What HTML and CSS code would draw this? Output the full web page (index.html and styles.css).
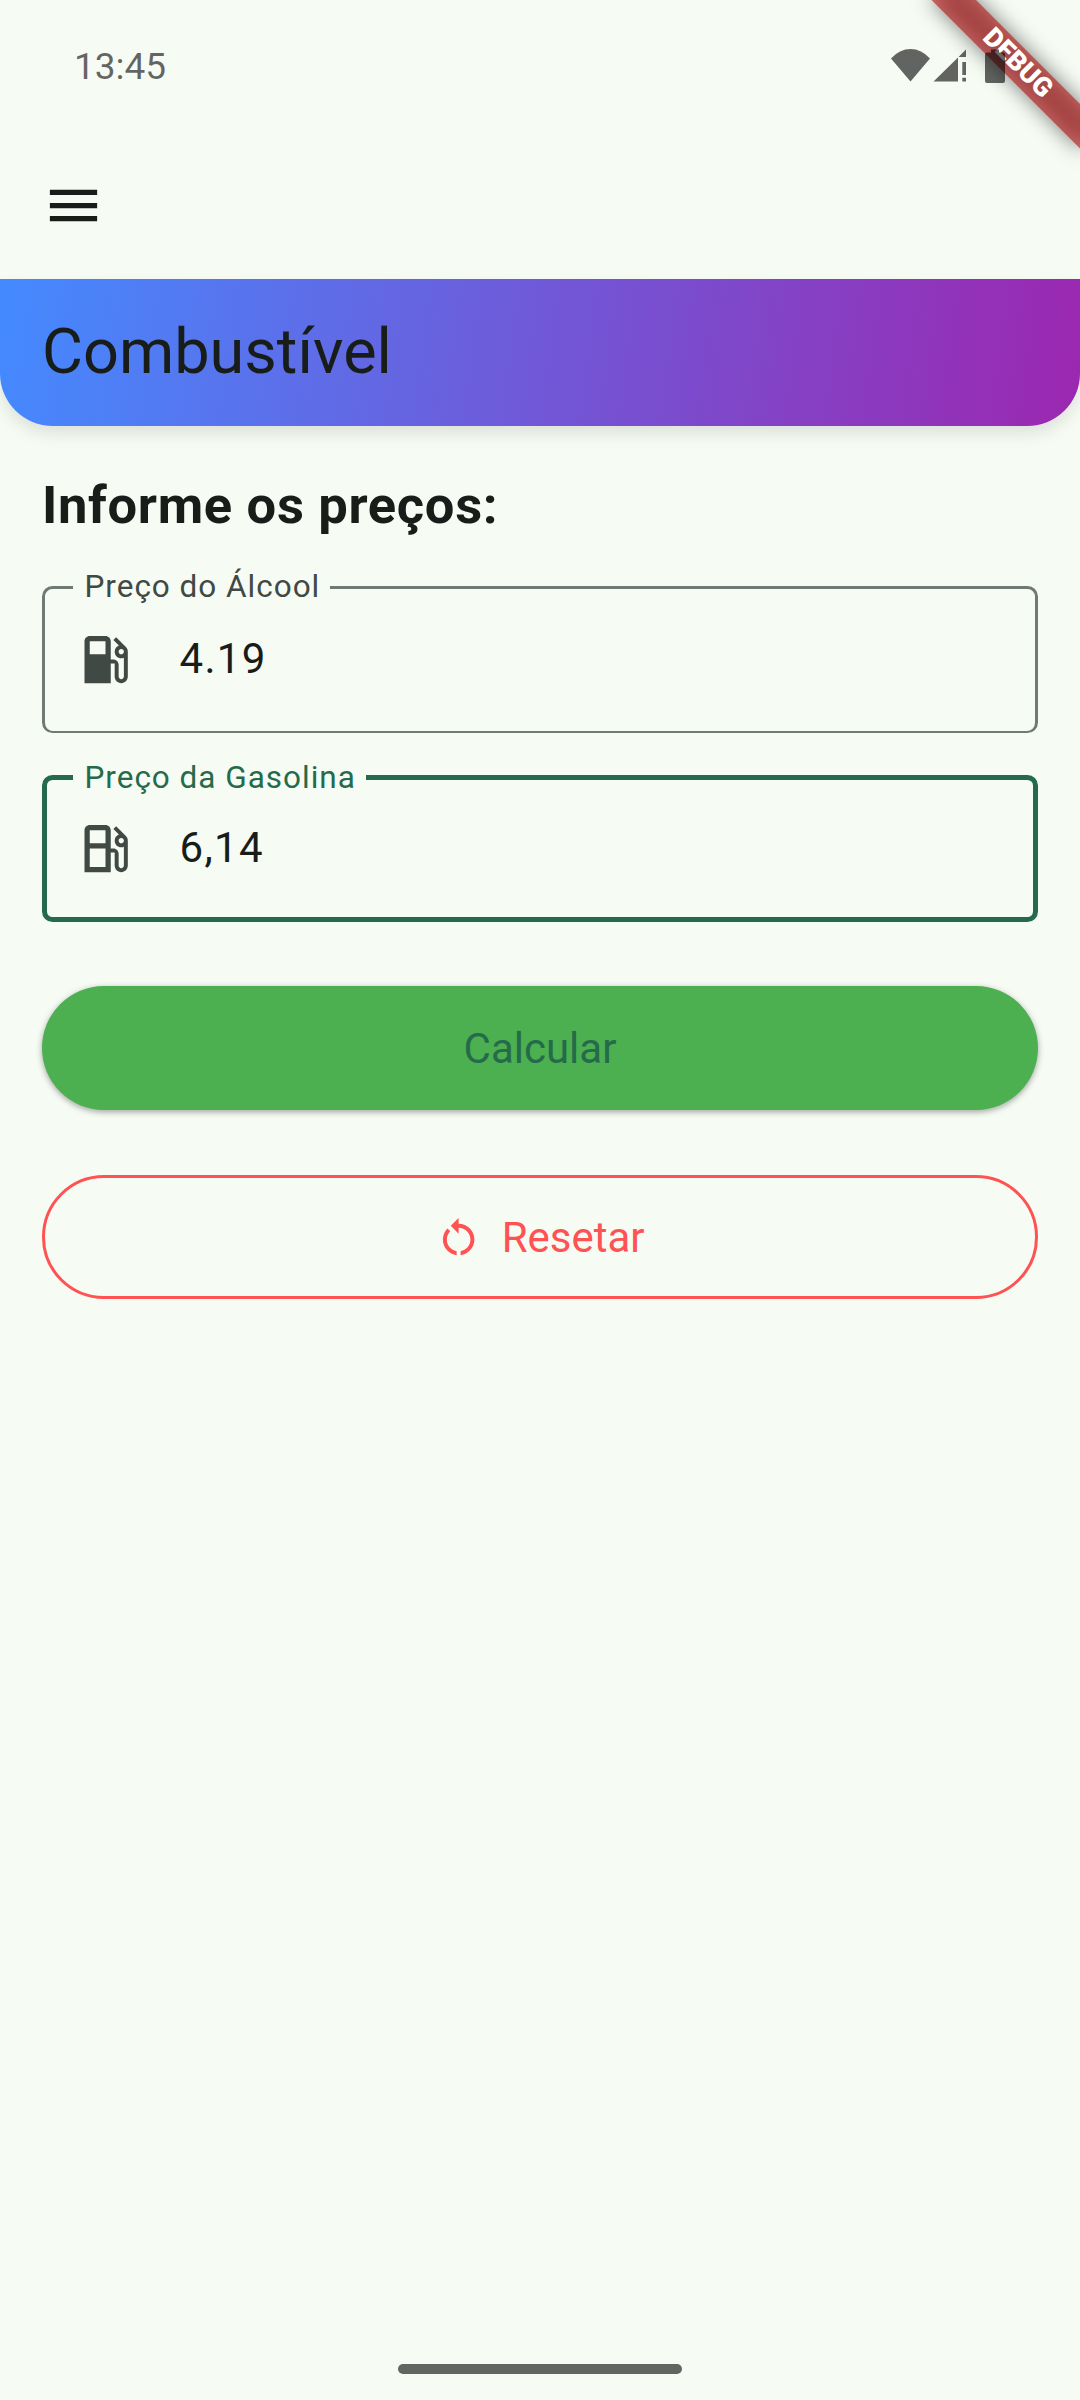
FILE: index.html
```html
<!DOCTYPE html>
<html lang="pt-BR">
<head>
<meta charset="utf-8">
<title>Combustível</title>
<link rel="stylesheet" href="styles.css">
</head>
<body>
<div class="screen">
  <svg class="debug-banner" viewBox="0 0 200 200" aria-hidden="true">
    <defs><filter id="soft" x="-50%" y="-100%" width="200%" height="300%"><feGaussianBlur stdDeviation="10.4"/></filter></defs>
    <g transform="translate(200 0) rotate(45)">
      <rect class="banner-shadow" x="-105" y="73.5" width="210" height="31.5" filter="url(#soft)"/>
      <rect class="banner-band" x="-105" y="73.5" width="210" height="31.5"/>
      <text class="banner-text" x="0.5" y="97">DEBUG</text>
    </g>
  </svg>
  <header class="status-bar">
    <span class="clock">13:45</span>
    <svg class="status-icons" viewBox="0 0 115 35" aria-hidden="true">
      <path d="M0 9.5Q8.5 0 19.5 0T39 9.5L19.5 32.5Z"/>
      <path d="M42.5 32.5L67 8.5V32.5ZM67.500 8L75 .5V8ZM71.300 13H75V26H71.300ZM71.300 28.700H75V32.500H71.300Z"/>
      <path d="M96 3.500H100V.5H108V3.500H112Q114 3.500 114 5.500V32Q114 34 112 34H96Q94 34 94 32V5.500Q94 3.500 96 3.500Z"/>
    </svg>
  </header>
  <nav class="app-bar">
    <svg class="icon" viewBox="0 0 24 24"><path d="M3 18h18v-2H3v2zm0-5h18v-2H3v2zm0-7v2h18V6H3z"/></svg>
  </nav>
  <h1 class="title">Combustível</h1>
  <main class="content">
    <h2 class="heading">Informe os preços:</h2>
    <div class="field">
      <label class="field-label">Preço do Álcool</label>
      <svg class="icon" viewBox="0 0 24 24"><path d="M19.770 7.230l.01-.01-3.720-3.720L15 4.560l2.110 2.110c-.94.36-1.610 1.260-1.610 2.330 0 1.380 1.120 2.500 2.500 2.500.36 0 .69-.08 1-.21v7.210c0 .55-.45 1-1 1s-1-.45-1-1V14c0-1.100-.9-2-2-2h-1V5c0-1.100-.9-2-2-2H6c-1.100 0-2 .9-2 2v16h10v-7.500h1.500v5c0 1.380 1.120 2.500 2.500 2.500s2.500-1.120 2.500-2.500V9c0-.69-.28-1.320-.73-1.770zM12 10H6V5h6v5zm6 0c-.55 0-1-.45-1-1s.45-1 1-1 1 .45 1 1-.45 1-1 1z"/></svg>
      <span class="value">4.19</span>
    </div>
    <div class="field focused">
      <label class="field-label">Preço da Gasolina</label>
      <svg class="icon" viewBox="0 0 24 24"><path d="M19.770 7.230l.01-.01-3.720-3.720L15 4.560l2.110 2.110c-.94.36-1.610 1.260-1.610 2.330 0 1.380 1.120 2.500 2.500 2.500.36 0 .69-.08 1-.21v7.210c0 .55-.45 1-1 1s-1-.45-1-1V14c0-1.100-.9-2-2-2h-1V5c0-1.100-.9-2-2-2H6c-1.100 0-2 .9-2 2v16h10v-7.500h1.500v5c0 1.380 1.120 2.500 2.500 2.500s2.500-1.120 2.500-2.500V9c0-.69-.28-1.320-.73-1.770zM12 19H6v-7h6v7zm0-9H6V5h6v5zm6 0c-.55 0-1-.45-1-1s.45-1 1-1 1 .45 1 1-.45 1-1 1z"/></svg>
      <span class="value">6,14</span>
    </div>
    <button class="button calculate">Calcular</button>
    <button class="button reset">
      <svg class="reset-icon" viewBox="0 0 24 24"><path d="M12 5V2L8 6l4 4V7c3.310 0 6 2.690 6 6 0 2.970-2.170 5.430-5 5.910v2.020c3.950-.49 7-3.850 7-7.930 0-4.420-3.580-8-8-8zm-6 8c0-1.650.67-3.150 1.760-4.240L6.340 7.340C4.900 8.790 4 10.790 4 13c0 4.080 3.050 7.440 7 7.930v-2.020c-2.830-.48-5-2.940-5-5.910z"/></svg>
      <span>Resetar</span>
    </button>
  </main>
  <footer class="nav-bar"><div class="nav-handle"></div></footer>
</div>
</body>
</html>
```
FILE: styles.css
```css
* { box-sizing: border-box; }
body { margin: 0; background: #f6fbf4; color: #181d19; font-family: Roboto, sans-serif; }
svg { display: block; fill: currentColor; flex: none; }
.screen { position: relative; width: 1080px; height: 2400px; overflow: hidden; display: flex; flex-direction: column; background: #f6fbf4; }

.debug-banner { position: absolute; top: 0; right: 0; width: 200px; height: 200px; }
.banner-shadow { fill: rgba(0, 0, 0, .498); }
.banner-band { fill: rgba(183, 28, 28, .627); }
.banner-text { fill: #fff; font-size: 26.8px; font-weight: 900; text-anchor: middle; }

.status-bar { position: relative; height: 132px; padding: 0 74px; display: flex; justify-content: space-between; color: rgba(0, 0, 0, .6); }
.clock { margin-top: 45px; font-size: 37px; line-height: 44px; }
.status-icons { width: 115px; height: 35px; margin-top: 49px; }

.app-bar { height: 147px; padding: 42px; }
.icon { width: 63px; height: 63px; }

.title { height: 147px; margin: 0; padding: 0 42px; border-radius: 0 0 52.5px 52.5px; background: linear-gradient(97.75deg, #448aff, #9c27b0); box-shadow: 0 8px 16px rgba(0, 0, 0, .1); font-size: 63px; font-weight: 400; line-height: 146px; }

.content { flex: 1; padding: 42px; display: flex; flex-direction: column; }
.heading { height: 76px; margin: 0 0 42px; font-size: 52.5px; font-weight: 700; line-height: 74px; letter-spacing: .66px; }

.field { position: relative; height: 147px; margin-bottom: 42px; display: flex; align-items: center; padding-left: 31.5px; }
.field::before { content: ""; position: absolute; inset: 0; border: 3px solid #707973; border-bottom-width: 2px; border-radius: 10.5px; }
.focused::before { border: 5px solid #256b4b; }
.field .icon { color: #404943; }
.field-label { position: absolute; left: 31px; top: -19px; padding: 0 10px 0 11.5px; background: #f6fbf4; color: #404943; font-size: 31.5px; line-height: 40px; letter-spacing: .98px; white-space: nowrap; }
.focused .field-label { top: -17px; color: #256b4b; }
.value { margin: -2px 0 0 43px; font-size: 42px; line-height: 63px; letter-spacing: 1.31px; }

.button { height: 124px; width: 100%; padding: 2px 0 0; display: flex; align-items: center; justify-content: center; border: 0; border-radius: 62px; font: 400 42px/60px Roboto, sans-serif; }
.calculate { margin-top: 22px; background: #4caf50; color: #256b4b; box-shadow: 0 2px 6px rgba(0, 0, 0, .35); }
.reset { margin-top: 65px; gap: 19px; border: 3px solid #ff5252; background: transparent; color: #ff5252; }
.reset-icon { width: 47.25px; height: 47.25px; }

.nav-bar { height: 63px; display: flex; justify-content: center; align-items: center; }
.nav-handle { width: 284px; height: 10px; border-radius: 5px; background: #636562; }
```
